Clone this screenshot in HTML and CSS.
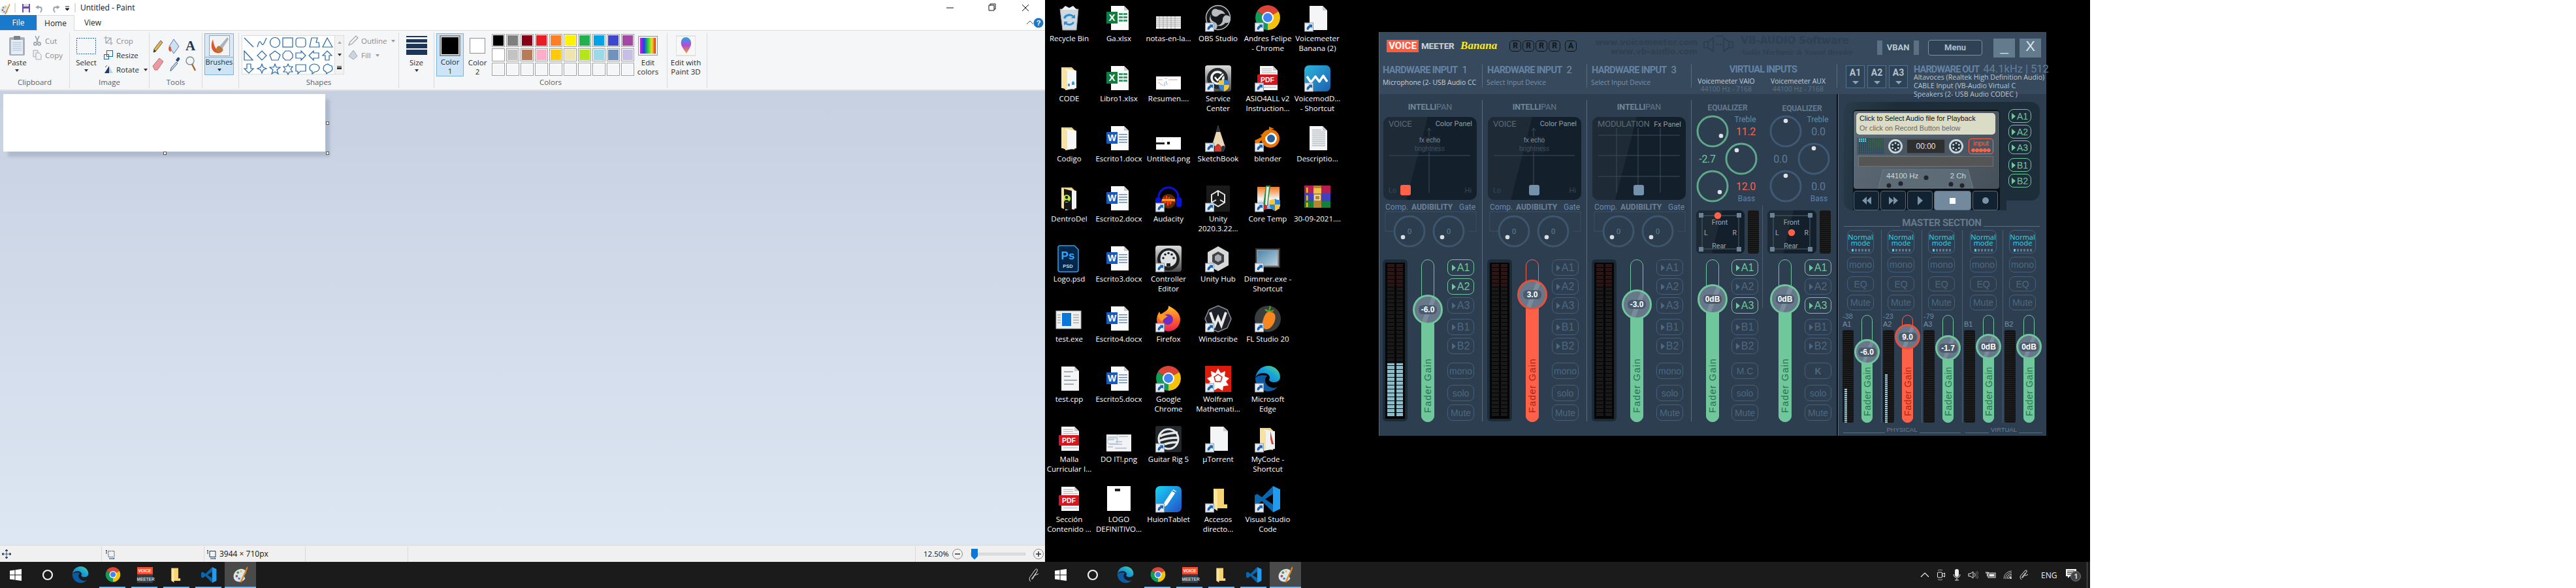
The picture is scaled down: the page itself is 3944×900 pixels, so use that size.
FILE: index.html
```html
<!DOCTYPE html>
<html lang="en">
<head>
<meta charset="utf-8">
<title>Desktop</title>
<link rel="stylesheet" href="styles.css">
</head>
<body>
<svg class="defs" aria-hidden="true">
<defs>
<linearGradient id="edgeG" x1="0" y1="1" x2="1" y2="0"><stop offset="0" stop-color="#0c6cc4"/><stop offset=".6" stop-color="#1ba6d8"/><stop offset="1" stop-color="#5fdc6a"/></linearGradient>
<linearGradient id="vmG" x1="0" y1="0" x2="1" y2="1"><stop offset="0" stop-color="#2bb6dc"/><stop offset="1" stop-color="#1c5fb0"/></linearGradient>
<linearGradient id="huG" x1="0" y1="0" x2="1" y2="1"><stop offset="0" stop-color="#16d4f6"/><stop offset="1" stop-color="#2350c8"/></linearGradient>
<linearGradient id="svcG" x1="0" y1="0" x2="0" y2="1"><stop offset="0" stop-color="#dcdcdc"/><stop offset="1" stop-color="#4a4a4a"/></linearGradient>
<linearGradient id="ctG" x1="0" y1="0" x2="0" y2="1"><stop offset="0" stop-color="#f07a1e"/><stop offset=".55" stop-color="#f5f5f5"/><stop offset="1" stop-color="#7aa6dc"/></linearGradient>
<linearGradient id="ffG" x1="0" y1="0" x2="0" y2="1"><stop offset="0" stop-color="#ffc02a"/><stop offset=".6" stop-color="#ff5a2c"/><stop offset="1" stop-color="#e8205a"/></linearGradient>
<linearGradient id="dimG" x1="0" y1="0" x2="1" y2="1"><stop offset="0" stop-color="#4f86ad"/><stop offset="1" stop-color="#b8d2de"/></linearGradient>
<linearGradient id="rainG" x1="0" y1="0" x2="1" y2="0"><stop offset="0" stop-color="#d020d0"/><stop offset=".25" stop-color="#2040f0"/><stop offset=".5" stop-color="#20d040"/><stop offset=".75" stop-color="#f0e020"/><stop offset="1" stop-color="#f02020"/></linearGradient>
<linearGradient id="p3dG" x1="0" y1="0" x2="0" y2="1"><stop offset="0" stop-color="#20a8e8"/><stop offset=".5" stop-color="#b84ad8"/><stop offset="1" stop-color="#f8a020"/></linearGradient>
<pattern id="pB" width="3" height="3" patternUnits="userSpaceOnUse"><rect width="2" height="2" fill="#1c4a5c"/></pattern>
<pattern id="pG" width="3" height="3" patternUnits="userSpaceOnUse"><rect width="2" height="2" fill="#1f5a36"/></pattern>
<pattern id="pC" width="3" height="3" patternUnits="userSpaceOnUse"><rect width="2" height="2" fill="#2fe0f4"/></pattern>

<g id="sc"><rect x=".5" y="27" width="13" height="13" fill="#e9edf1" stroke="#8b98a4"/><path d="M3.5 37.5c0-4 1.500-6 4.500-6.500l-1.500-1.500h5.500v5.500l-1.600-1.600c-2 .6-3.400 1.800-3.900 4.100z" fill="#1a62b4"/></g>
<g id="doc"><path d="M8 1h20l7 7v30H8z" fill="#fbfbfb"/><path d="M28 1v7h7z" fill="#c9cdd1"/></g>
<g id="blank"><path d="M8 1h20l7 7v30H8z" fill="#f4f5f6"/><path d="M28 1v7h7z" fill="#c9cdd1"/></g>
<g id="excel"><use href="#doc"/><g fill="#3a9a68"><rect x="20" y="12" width="6" height="3"/><rect x="27" y="12" width="6" height="3"/><rect x="20" y="17" width="6" height="3"/><rect x="27" y="17" width="6" height="3"/><rect x="20" y="22" width="6" height="3"/><rect x="27" y="22" width="6" height="3"/></g><rect x="1" y="10" width="17" height="18" fill="#107c41"/><text x="9.500" y="24" class="ict" font-size="15" fill="#fff">X</text></g>
<g id="word"><use href="#doc"/><g fill="#5a8fdc"><rect x="20" y="13" width="13" height="1.500"/><rect x="20" y="17" width="13" height="1.500"/><rect x="20" y="21" width="13" height="1.500"/><rect x="20" y="25" width="13" height="1.500"/></g><rect x="1" y="10" width="17" height="18" fill="#185abd"/><text x="9.500" y="24" class="ict" font-size="14" fill="#fff">W</text></g>
<g id="pdf"><path d="M8 1h20l7 7v30H8z" fill="#f5f5f5"/><path d="M28 1v7h7z" fill="#c9cdd1"/><g fill="#b8b8b8"><rect x="11" y="5" width="15" height="1"/><rect x="11" y="8" width="15" height="1"/><rect x="11" y="11" width="22" height="1"/><rect x="11" y="33" width="22" height="1"/></g><rect x="4" y="14" width="31" height="16" rx="1" fill="#d9141e"/><text x="19.500" y="26" class="ict" font-size="10.500" fill="#fff">PDF</text></g>
<g id="textdoc"><path d="M8 1h20l7 7v30H8z" fill="#f4f5f6"/><path d="M28 1v7h7z" fill="#c9cdd1"/><path d="M12 7h14M12 10h20M12 13h20M12 16h20M12 19h20M12 22h20M12 25h20M12 28h20M12 31h20" stroke="#9aa0a6"/></g>
<g id="cppdoc"><path d="M8 1h20l7 7v30H8z" fill="#f4f5f6"/><path d="M28 1v7h7z" fill="#c9cdd1"/><path d="M12 9h14M12 16h10M12 22h20M12 28h15" stroke="#a6acb2" stroke-width="2"/></g>
<g id="folderdoc"><path d="M8 3h16l4 4v30l-10-2-10 0z" fill="#f3d27a"/><path d="M14 5l17 3v27l-17 3z" fill="#f6f7f8"/><path d="M8 3v31l9 4V8z" fill="#f7e3a1"/><path d="M24 26l2-2 2 2v4h-4zM18 28h3v4h-3z" fill="#3a9ad9"/></g>
<g id="folderplain"><path d="M8 3h16l4 4v30l-10-2-10 0z" fill="#f3d27a"/><path d="M14 5l17 3v27l-17 3z" fill="#f6f7f8"/><path d="M8 3v31l9 4V8z" fill="#f7e3a1"/></g>
<g id="dentro"><path d="M8 3h16l4 4v30l-10-2-10 0z" fill="#f3d27a"/><path d="M14 5l17 3v27l-17 3z" fill="#f1f2f3"/><path d="M8 4v31l16 3V8z" fill="#151515"/><circle cx="16" cy="20" r="6" fill="#b6e83a"/><circle cx="16" cy="18" r="2.200" fill="#152015"/><path d="M12 25c1-4 7-4 8 0" fill="#152015"/><path d="M8 3v31l4 2V5z" fill="#f7e3a1"/></g>
<g id="folderpdf"><path d="M8 3h16l4 4v30l-10-2-10 0z" fill="#f3d27a"/><path d="M14 5l17 3v27l-17 3z" fill="#f1f2f3"/><path d="M8 3v31l9 4V8z" fill="#f7e3a1"/><path d="M24 8l5 20-3 0-2-8z" fill="#d9402c"/></g>
<g id="yfolder"><path d="M13 4h16v24h5v6H19l-6 0z" fill="#f6d46f"/><path d="M13 4l6 3v31l-6-4z" fill="#f9e6a6"/></g>
<g id="recycle"><path d="M6 6h28l-3 32H10z" fill="#cfd8de" stroke="#98a5ad"/><path d="M8 7l6-6 6 3 6-3 6 6z" fill="#eef2f4"/><path d="M14 21a7 7 0 0 1 11-3l-2 2h6v-6l-2 2a10 10 0 0 0-16 3zM26 25a7 7 0 0 1-10 2l2-2h-6v6l2-2a10 10 0 0 0 14-2z" fill="#2a8fd8"/></g>
<g id="tNotas"><rect x="1" y="17" width="38" height="19" fill="#f0f0f0"/><path d="M1 20h38M1 23h38M1 26h38M1 29h38M1 32h38M6 17v19M12 17v19M18 17v19M24 17v19M30 17v19" stroke="#9a9a9a" stroke-width=".8"/></g>
<g id="tRes"><rect x="1" y="17" width="38" height="20" fill="#fff"/><path d="M3 22h8M4 26l8 5M14 20h4M20 22h14" stroke="#e0a090"/><path d="M14 26v6M16 24l2 6" stroke="#7ab0e0"/></g>
<g id="tUnt"><rect x="1" y="18" width="38" height="19" fill="#fff"/><rect x="1" y="26" width="13" height="3" fill="#222"/><rect x="18" y="25" width="4" height="4" fill="#111"/><path d="M5 21h1M10 22h1" stroke="#888"/></g>
<g id="tDoit"><rect x="1" y="13" width="38" height="26" fill="#f1f3f5"/><path d="M3 17h14M20 16h14M3 21h10M15 24h10M5 28h20M3 32h8M14 34h18" stroke="#8fa4ba"/><path d="M18 13v16M3 19h14v8H3z" stroke="#b6c4d2" fill="none"/></g>
<g id="tLogo"><rect x="2" y="0" width="36" height="38" fill="#fff"/><rect x="14" y="4" width="8" height="4" fill="#222"/></g>
<g id="obs"><circle cx="20" cy="19" r="18.500" fill="#15171a" stroke="#c8c8c8" stroke-width="1.400"/><path d="M20 7a12 12 0 0 1 11 7 9 9 0 0 0-11 2 6 6 0 1 1 0-9z" fill="#b9bcc0"/><path d="M9 27a12 12 0 0 1 0-13 9 9 0 0 0 6 12 6 6 0 1 1-6 1z" fill="#b9bcc0"/><path d="M31 27a12 12 0 0 1-13 4 9 9 0 0 0 9-10 6 6 0 1 1 4 6z" fill="#b9bcc0"/></g>
<g id="chrome"><path d="M20 19L3.600 9.500A19 19 0 0 1 36.400 9.500z" fill="#db4437"/><path d="M20 19L36.400 9.500A19 19 0 0 1 20 38z" fill="#f4c20d"/><path d="M20 19L20 38A19 19 0 0 1 3.600 9.500z" fill="#0f9d58"/><circle cx="20" cy="19" r="9" fill="#fff"/><circle cx="20" cy="19" r="7" fill="#4285f4"/></g>
<g id="edge"><path d="M1 19C2 8 10 0 21 0c10 0 18 8 18 17 0 5-4 8-9 8-5 0-8-2-8-4 0-1 1-1 1-3 0-4-4-7-9-7C7 11 2 14 1 19z" fill="url(#edgeG)"/><path d="M1 19c0 11 9 20 20 20 6 0 11-3 14-7-3 2-7 2-10 1-6-2-10-7-9-13 1-3 3-4 3-5-8-2-16 0-18 4z" fill="#0c59a4"/></g>
<g id="vscode"><path d="M28 0l11 5v30l-11 5z" fill="#1f9cf0"/><path d="M28 0L11 17 4 12 0 14v12l4 2 7-5 17 17V28L16 20 28 12z" fill="#0a66ad"/></g>
<g id="service"><rect width="40" height="40" rx="4" fill="url(#svcG)"/><circle cx="19" cy="20" r="16" fill="#25292d"/><circle cx="19" cy="19" r="9" fill="none" stroke="#f0f0f0" stroke-width="3.500"/><path d="M15 18l4 5 9-10" fill="none" stroke="#25292d" stroke-width="5"/><path d="M15 18l4 5 9-10" fill="none" stroke="#fff" stroke-width="2.500"/><use href="#shield" transform="translate(21 21)"/></g>
<g id="shield"><path d="M8 0c2 2 5 2 8 2v8c0 4-3 7-8 9-5-2-8-5-8-9V2c3 0 6 0 8-2z" fill="#2f86d8"/><path d="M8 0v9H0V2c3 0 6 0 8-2zM8 9h8c0 5-3 8-8 10z" fill="#f8c63a"/></g>
<g id="voicemod"><rect width="40" height="40" rx="7" fill="url(#vmG)"/><path d="M4 17l6 9 7-9 6 8 6-9 6 9" fill="none" stroke="#fff" stroke-width="3.400" stroke-linejoin="round"/></g>
<g id="sketch"><path d="M20 0l11 33-3 7H13l-3-7z" fill="#ead9b4"/><path d="M20 0l3.500 10h-7z" fill="#30343a"/><path d="M10 33c2-3 5-3 6 0v7h-4zM16 33c2-6 6-6 8 0v7h-8z" fill="#263340"/><path d="M15 40v-7c2-5 8-5 10 0v7z" fill="#d8382c"/><path d="M25 40v-7c2-3 5-2 6 0l-3 7z" fill="#263340"/></g>
<g id="blender"><circle cx="24" cy="20" r="14" fill="#ea7600"/><circle cx="25" cy="20" r="9" fill="#fff"/><circle cx="25" cy="20" r="6" fill="#27609a"/><path d="M0 23l14-7-6-1 12-6 4 2-16 14-4 8c-1 1-3 0-2-2z" fill="#ea7600"/><path d="M22 2l8 3-8 2z" fill="#ea7600"/></g>
<g id="audacity"><path d="M5 28V18a15 15 0 0 1 30 0v10" fill="none" stroke="#0a14d8" stroke-width="3"/><rect x="0" y="18" width="8" height="15" rx="3.500" fill="#0a14d8"/><rect x="32" y="18" width="8" height="15" rx="3.500" fill="#0a14d8"/><ellipse cx="20" cy="24" rx="11" ry="11" fill="#5c2c08"/><path d="M9 24h3l1-4 2 7 2-11 2 15 2-13 2 11 2-8 2 3h3" fill="none" stroke="#ff3a14" stroke-width="2"/><path d="M10 22h20" stroke="#ffc81e" stroke-width="2"/></g>
<g id="unity"><rect x="2" y="0" width="36" height="40" fill="#1a1a1a"/><path d="M20 8l10 6v12l-10 6-10-6V14z" fill="none" stroke="#e6e6e6" stroke-width="2"/><path d="M20 8v8M10 26l7-4M30 26l-7-4" stroke="#e6e6e6" stroke-width="2"/></g>
<g id="coretemp"><rect x="4" y="2" width="34" height="34" fill="url(#ctG)"/><path d="M17 0h7l-4 31-7-1z" fill="#1e8a3c"/><path d="M18 2h4l-3 28h-3z" fill="#eee"/><circle cx="15" cy="33" r="4" fill="#e02020"/><use href="#shield" transform="translate(23 20)"/></g>
<g id="winrar"><rect y="0" width="40" height="12" fill="#b81e50"/><rect y="12" width="40" height="12" fill="#4040c0"/><rect y="24" width="40" height="10" fill="#14803a"/><rect x="3" y="3" width="2.500" height="8" fill="#f0c020"/><rect x="3" y="15" width="2.500" height="8" fill="#f0c020"/><rect x="3" y="26" width="2.500" height="7" fill="#f0c020"/><rect x="14" y="0" width="12" height="34" fill="#b8842e"/><rect x="14" y="4" width="12" height="8" fill="#f0c050"/><rect x="16" y="15" width="8" height="7" fill="none" stroke="#eee" stroke-width="1.500"/></g>
<g id="ps"><path d="M3 3a3 3 0 0 1 3-3h22l6 6v31a3 3 0 0 1-3 3H6a3 3 0 0 1-3-3z" fill="#00264a" stroke="#2d9ee8" stroke-width="1.500"/><text x="18" y="21" class="ict" font-size="17" fill="#31a8ff">Ps</text><text x="18" y="34" class="ict" font-size="7.500" fill="#c8d8e8">PSD</text></g>
<g id="ctrl"><rect width="40" height="40" rx="4" fill="url(#svcG)"/><circle cx="20" cy="21" r="17" fill="#1e1e1e"/><circle cx="20" cy="20" r="12.500" fill="#dfe2e4"/><g fill="#222"><circle cx="12" cy="19" r="1.800"/><circle cx="15" cy="13.500" r="1.800"/><circle cx="20" cy="11.500" r="1.800"/><circle cx="25" cy="13.500" r="1.800"/><circle cx="28" cy="19" r="1.800"/></g><rect x="17" y="27" width="6" height="5" fill="#1e1e1e"/></g>
<g id="uhub"><path d="M20 1l16 9v20l-16 9-16-9V10z" fill="#d6d8da"/><path d="M20 9l9 5v11l-9 5-9-5V14z" fill="#3f4246"/><path d="M20 13l5 3v6l-5 3-5-3v-6z" fill="#a8acb0"/></g>
<g id="dimmer"><rect x="1" y="4" width="38" height="30" rx="1" fill="#333"/><rect x="3" y="6" width="34" height="26" fill="#8a9298"/><rect x="5" y="8" width="30" height="22" fill="url(#dimG)"/></g>
<g id="testexe"><rect x="0" y="8" width="38" height="27" fill="#f0f0f0" stroke="#b8b8b8"/><rect x="9" y="11" width="14" height="20" fill="#0a78d8"/><path d="M2 14h5M2 18h5M2 22h5M2 26h5M26 14h9M26 18h9M26 22h9M26 26h9" stroke="#8a8a8a"/></g>
<g id="firefox"><path d="M20 0c10 5 18 11 18 21a18 18 0 0 1-36 0c0-5 2-9 4-12l2 4c3-2 8-4 11-8 1-2 1-3 1-5z" fill="url(#ffG)"/><circle cx="19" cy="21" r="8" fill="#6e2cc8"/><path d="M3 16c4-6 10-2 16 0-4 3-7 4-9 9z" fill="#ff9a20"/></g>
<g id="windscribe"><path d="M20 0l14 6 6 14-6 14-14 6-14-6-6-14 6-14z" fill="#1e2228" stroke="#8d9096" stroke-width="1.500"/><path d="M8 10l7 20 5-12 5 12 7-20" fill="none" stroke="#e8e8e8" stroke-width="4"/></g>
<g id="fl"><circle cx="20" cy="20" r="20" fill="#3a3d3e"/><path d="M22 9c8 0 11 5 9 13-2 8-8 14-13 14-6 0-8-7-5-15 2-7 5-12 9-12z" fill="#f8861e"/><path d="M20 9c-3 0-4-2-5-4 3 0 5 1 6 3l2-8 2 1-2 7 7-2-2 3z" fill="#5aa62c"/></g>
<g id="wolfram"><rect width="40" height="40" fill="#dc1b0b"/><path d="M20 4l4 7 7-3-1 8 7 3-5 5 4 6-8 1-1 7-7-4-7 4-1-7-8-1 4-6-5-5 7-3-1-8 7 3z" fill="#fff"/><path d="M20 13l6 4-2 7h-8l-2-7z" fill="none" stroke="#dc1b0b" stroke-width="1.500"/></g>
<g id="guitar"><rect width="40" height="40" rx="3" fill="#22282c"/><circle cx="20" cy="20" r="15" fill="none" stroke="#e8e8e8" stroke-width="3"/><path d="M7 16c8-5 18-5 27-6M6 23c8-4 20-5 28-5M9 30c8-4 16-5 24-5" stroke="#e8e8e8" stroke-width="3.500" fill="none"/></g>
<g id="huion"><rect width="40" height="40" rx="7" fill="url(#huG)"/><path d="M27 5l5 3-14 21-6 4 1-7z" fill="#fff"/><path d="M26 7l5 3" stroke="#1a72d8" stroke-width="1.500"/></g>
<g id="palette"><path d="M3 15C5 7 14 3 20 6c4 2 4 6 1 8-2 2 0 5 1 7-3 5-8 6-12 5C4 25 2 20 3 15z" fill="#dbe6ee"/><circle cx="8" cy="17" r="2" fill="#d8342c"/><circle cx="10" cy="11" r="2" fill="#37a24a"/><circle cx="15" cy="9" r="1.800" fill="#f0c020"/><circle cx="12" cy="21" r="1.800" fill="#3a70d8"/><path d="M13 27L22 8l2-5 2-2 0 3-2 5-8 18z" fill="#e08a1e"/></g>
</defs>
</svg>

<div class="screen">
  <div class="top">
    <section class="paint">
      <header class="p-title">
        <svg class="p-qa" viewBox="0 0 120 24" width="120" height="24"><use href="#palette" transform="translate(-1 5) scale(.62)"/><path d="M23 5v14" stroke="#bbb"/><rect x="34" y="6" width="12" height="13" fill="#6c4d9e"/><rect x="36" y="6" width="8" height="4" fill="#ddd"/><rect x="36" y="13" width="8" height="6" fill="#eee"/><path d="M59 9l-3 2 3 2M56 11h5c3 0 4 4 1 8" fill="none" stroke="#9aa4ae" stroke-width="2"/><path d="M87 9l3 2-3 2M90 11h-5c-3 0-4 4-1 8" fill="none" stroke="#9aa4ae" stroke-width="2"/><path d="M100 10h6M100 13h6l-3 3z" stroke="#222" fill="#222"/><path d="M115 5v14" stroke="#bbb"/></svg>
        <span class="p-name">Untitled - Paint</span>
        <svg class="p-wc" viewBox="0 0 140 24" width="140" height="24"><path d="M3 12h11" stroke="#111"/><path d="M68 8h8v8h-8zM70 8V6h8v8h-2" fill="none" stroke="#111"/><path d="M119 7l10 10M129 7l-10 10" stroke="#111"/></svg>
      </header>
      <nav class="p-tabs">
        <span class="tab tab-file">File</span><span class="tab tab-home">Home</span><span class="tab">View</span>
        <svg class="p-help" viewBox="0 0 30 24" width="30" height="24"><path d="M2 14l5-5 5 5" fill="none" stroke="#555"/><circle cx="20" cy="12" r="7.500" fill="#1d78c8"/><text x="20" y="16" class="ict" font-size="11" fill="#fff">?</text></svg>
      </nav>
      <div class="ribbon">
        <div class="rg rg-clip">
          <div class="rb">
            <div class="big b-paste">
              <svg viewBox="0 0 30 32" width="30" height="32"><rect x="3" y="3" width="24" height="28" rx="2" fill="#a8b0b8"/><rect x="6" y="7" width="18" height="22" fill="#e6edf6"/><path d="M8 11h14M8 14h14M8 17h14M8 20h14M8 23h14" stroke="#a9bdd6"/><rect x="10" y="1" width="10" height="6" rx="1" fill="#7a828a"/></svg>
              <span>Paste</span><i class="dn"></i>
            </div>
            <div class="sm">
              <div class="smr off"><svg viewBox="0 0 16 16" width="16" height="16"><path d="M5 1l4 9M11 1L7 10" stroke="#8e98a2" stroke-width="1.400"/><circle cx="5" cy="13" r="2.200" fill="none" stroke="#8e98a2" stroke-width="1.400"/><circle cx="11" cy="13" r="2.200" fill="none" stroke="#8e98a2" stroke-width="1.400"/></svg><span>Cut</span></div>
              <div class="smr off"><svg viewBox="0 0 16 16" width="16" height="16"><path d="M2 1h7v10H2z" fill="#eee" stroke="#a5adb5"/><path d="M6 5h5l3 3v7H6z" fill="#f4f4f4" stroke="#a5adb5"/></svg><span>Copy</span></div>
            </div>
          </div>
          <div class="rl">Clipboard</div>
        </div>
        <div class="rg rg-img">
          <div class="rb">
            <div class="big b-select">
              <svg viewBox="0 0 44 32" width="44" height="32"><rect x="7.500" y="4.500" width="29" height="24" fill="none" stroke="#1b5fa5" stroke-dasharray="2 1.500"/></svg>
              <span>Select</span><i class="dn"></i>
            </div>
            <div class="sm">
              <div class="smr off"><svg viewBox="0 0 16 16" width="16" height="16"><path d="M4 1v11h11M1 4h11v11M4 12L12 4" fill="none" stroke="#9aa4ae" stroke-width="1.200"/></svg><span>Crop</span></div>
              <div class="smr"><svg viewBox="0 0 16 16" width="16" height="16"><rect x="1.500" y="7.500" width="7" height="7" fill="none" stroke="#1b5fa5"/><rect x="5.500" y="1.500" width="9" height="9" fill="none" stroke="#1b5fa5"/></svg><span>Resize</span></div>
              <div class="smr"><svg viewBox="0 0 16 16" width="16" height="16"><path d="M2 14L9 3v11z" fill="#1e3e60"/><path d="M9 3l6 11H9z" fill="#c4d2e0"/><path d="M3 5l3-3" stroke="#1b5fa5"/></svg><span>Rotate</span><i class="dn dn-in"></i></div>
            </div>
          </div>
          <div class="rl">Image</div>
        </div>
        <div class="rg rg-tools">
          <div class="rb">
            <div class="toolgrid">
              <svg viewBox="0 0 20 24" width="20" height="24"><path d="M3 21l1-5L14 3l3 3L6 20z" fill="#e9b53c" stroke="#52606e"/><path d="M3 21l1-4 3 2z" fill="#333"/></svg>
              <svg viewBox="0 0 20 26" width="20" height="26"><path d="M9 2l8 11-8 11-7-11z" fill="#cfe0f1" stroke="#4f7eb0"/><path d="M2 13c-2 4 0 8 2 8 2 0 0-5 1-7z" fill="#e0522c"/></svg>
              <span class="t-a">A</span>
              <svg viewBox="0 0 20 24" width="20" height="24"><path d="M2 15L12 3l6 5L9 21H5z" fill="#ec9aa0" stroke="#b57078"/></svg>
              <svg viewBox="0 0 20 26" width="20" height="26"><path d="M4 24l1-5 8-9 2 2-8 9z" fill="#c2d4e6" stroke="#46688a"/><path d="M12 7l3-4c2-1 4 1 3 3l-3 4z" fill="#1f4a78"/></svg>
              <svg viewBox="0 0 20 26" width="20" height="26"><circle cx="9" cy="8" r="6" fill="#f2f5f8" stroke="#7e8a96" stroke-width="1.400"/><path d="M12 13l5 10" stroke="#a5642a" stroke-width="2.400"/></svg>
            </div>
          </div>
          <div class="rl">Tools</div>
        </div>
        <div class="rg rg-brush">
          <div class="rb">
            <div class="brush">
              <div class="brush-up"><svg viewBox="0 0 32 32" width="32" height="32"><rect x=".5" y=".5" width="31" height="31" fill="#f2f3f4" stroke="#9aa3ac"/><path d="M6 6c-4 9-3 19 6 21 6 1 9-2 10-6-3 3-7 3-10 1-3-3-5-8-6-16z" fill="#e0562c"/><path d="M28 3L16 17l4 4L30 6z" fill="#a9b4be"/><path d="M15 16c-3 1-4 4-4 6s4 5 7 3c2-1 3-3 3-5z" fill="#b57a3c"/></svg></div>
              <div class="brush-lo"><span>Brushes</span><i class="dn"></i></div>
            </div>
          </div>
          <div class="rl rl-empty">&nbsp;</div>
        </div>
        <div class="rg rg-shapes">
          <div class="rb">
            <div class="gallery">
              <svg viewBox="0 0 141 60" width="141" height="60"><g fill="none" stroke="#2467a6" stroke-width="1.200">
                <path d="M3 3l14 14"/><path d="M23 17c3-10 4-10 6-6s3 4 8-8"/><circle cx="50" cy="10" r="7.500"/><rect x="62" y="3" width="15" height="14"/><rect x="82" y="3" width="15" height="14" rx="4"/><path d="M103 17l3-14h9l-2 7h4l1 7z"/><path d="M130 3l8 14h-15z"/>
                <path d="M3 23l13 14H3z"/><path d="M30 23l7 7-7 7-7-7z"/><path d="M50 23l8 6-3 8H45l-3-8z"/><path d="M66 23h7l4 5v5l-4 4h-7l-4-4v-5z"/><path d="M82 26h8v-3l7 7-7 7v-3h-8z"/><path d="M117 26h-8v-3l-7 7 7 7v-3h8z"/><path d="M130 23l7 7h-4v7h-6v-7h-4z"/>
                <path d="M7 43h6v7h4l-7 7-7-7h4z"/><path d="M30 43l2 5 5 2-5 2-2 5-2-5-5-2 5-2z"/><path d="M50 43l2 5h6l-5 4 2 6-5-3-5 3 2-6-5-4h6z"/><path d="M70 43l2 4h5l-3 4 3 4h-5l-2 4-2-4h-5l3-4-3-4h5z"/><path d="M82 44h15v10h-8l-4 4v-4h-3z"/><path d="M110 43c5 0 8 3 8 6s-3 6-7 6l-4 3v-4c-3-1-4-3-4-5 0-3 3-6 7-6z"/><path d="M131 43l3 2 3 1 1 4-1 3-3 2-3 1-2 2-1-3-3-2-1-3 1-4 3-2z"/>
              </g></svg>
              <div class="gal-scroll"><i class="up"></i><i class="dn"></i><i class="more"></i></div>
            </div>
            <div class="sm sm-ol">
              <div class="smr off"><svg viewBox="0 0 16 16" width="16" height="16"><path d="M1 15l2-5L12 1l3 3-9 9z" fill="none" stroke="#9aa4ae" stroke-width="1.200"/></svg><span>Outline</span><i class="dn dn-in dn-off"></i></div>
              <div class="smr off"><svg viewBox="0 0 16 16" width="16" height="16"><path d="M8 1l6 9-6 5-7-5z" fill="#cdd6df" stroke="#9aa4ae"/></svg><span>Fill</span><i class="dn dn-in dn-off"></i></div>
            </div>
          </div>
          <div class="rl">Shapes</div>
        </div>
        <div class="rg rg-size">
          <div class="rb">
            <div class="big b-size">
              <svg viewBox="0 0 32 32" width="32" height="32"><g fill="#1d3658"><rect y="1" width="32" height="2"/><rect y="6" width="32" height="5"/><rect y="13" width="32" height="7"/><rect y="22" width="32" height="8"/></g></svg>
              <span>Size</span><i class="dn"></i>
            </div>
          </div>
          <div class="rl rl-empty">&nbsp;</div>
        </div>
        <div class="rg rg-colors">
          <div class="rb">
            <div class="col1">
              <div class="sw1"></div>
              <span>Color<br>1</span>
            </div>
            <div class="col2">
              <div class="sw2"></div>
              <span>Color<br>2</span>
            </div>
            <div class="palette">
              <span style="background:#000"></span><span style="background:#7f7f7f"></span><span style="background:#880015"></span><span style="background:#ed1c24"></span><span style="background:#ff7f27"></span><span style="background:#fff200"></span><span style="background:#22b14c"></span><span style="background:#00a2e8"></span><span style="background:#3f48cc"></span><span style="background:#a349a4"></span>
              <span style="background:#fff"></span><span style="background:#c3c3c3"></span><span style="background:#b97a57"></span><span style="background:#ffaec9"></span><span style="background:#ffc90e"></span><span style="background:#efe4b0"></span><span style="background:#b5e61d"></span><span style="background:#99d9ea"></span><span style="background:#7092be"></span><span style="background:#c8bfe7"></span>
              <span></span><span></span><span></span><span></span><span></span><span></span><span></span><span></span><span></span><span></span>
            </div>
            <div class="big2 b-edit">
              <svg viewBox="0 0 30 32" width="30" height="32"><rect x=".5" y="1.500" width="29" height="29" fill="#eee" stroke="#999"/><rect x="3" y="4" width="24" height="24" fill="url(#rainG)"/></svg>
              <span>Edit<br>colors</span>
            </div>
          </div>
          <div class="rl">Colors</div>
        </div>
        <div class="rg rg-p3d">
          <div class="rb">
            <div class="big2 b-p3d">
              <svg viewBox="0 0 30 32" width="30" height="32"><rect x="0" y="1" width="30" height="30" fill="#f8f8f8" stroke="#ccc"/><path d="M15 3c6 0 9 6 8 11s-5 10-7 14c-2-4-7-9-8-14s1-11 7-11z" fill="url(#p3dG)"/></svg>
              <span>Edit with<br>Paint 3D</span>
            </div>
          </div>
          <div class="rl rl-empty">&nbsp;</div>
        </div>
      </div>
      <main class="p-canvas">
        <div class="sheet"><i class="hd hd-r"></i><i class="hd hd-b"></i><i class="hd hd-c"></i></div>
      </main>
      <footer class="p-status">
        <div class="st st1"><svg viewBox="0 0 16 16" width="16" height="16"><path d="M8 1v14M1 8h14M8 1L6 3h4zM8 15l-2-2h4zM1 8l2-2v4zM15 8l-2-2v4z" fill="#1d3658" stroke="#1d3658" stroke-width=".8"/></svg></div>
        <div class="st st2"><svg viewBox="0 0 16 16" width="16" height="16"><path d="M5 3.500h9v9H5z" fill="none" stroke="#1d3658" stroke-dasharray="1.500 1"/><path d="M2 2v6M1 3l1-1 1 1M6 15h8M13 14l1 1-1 1" fill="none" stroke="#1d3658"/></svg></div>
        <div class="st st3"><svg viewBox="0 0 16 16" width="16" height="16"><path d="M5 3.500h9v9H5z" fill="none" stroke="#1d3658"/><path d="M2 2v6M1 3l1-1 1 1M6 15h8M13 14l1 1-1 1" fill="none" stroke="#1d3658"/></svg><span>3944 × 710px</span></div>
        <div class="st st4"></div>
        <div class="st-zoom">
          <span class="zp">12.50%</span>
          <svg viewBox="0 0 16 16" width="16" height="16"><circle cx="8" cy="8" r="7.500" fill="#f4f4f4" stroke="#8a8a8a"/><path d="M4 8h8" stroke="#333" stroke-width="1.500"/></svg>
          <div class="zs"><i></i></div>
          <svg viewBox="0 0 16 16" width="16" height="16"><circle cx="8" cy="8" r="7.500" fill="#f4f4f4" stroke="#8a8a8a"/><path d="M4 8h8M8 4v8" stroke="#333" stroke-width="1.500"/></svg>
        </div>
      </footer>
    </section>

    <section class="desk">
      <div class="icons">
        <div class="di"><svg viewBox="0 0 40 40"><use href="#recycle"/></svg><span>Recycle Bin</span></div>
        <div class="di"><svg viewBox="0 0 40 40"><use href="#excel"/></svg><span>Ga.xlsx</span></div>
        <div class="di"><svg viewBox="0 0 40 40"><use href="#tNotas"/></svg><span>notas-en-la...</span></div>
        <div class="di"><svg viewBox="0 0 40 40"><use href="#obs"/><use href="#sc"/></svg><span>OBS Studio</span></div>
        <div class="di"><svg viewBox="0 0 40 40"><use href="#chrome"/><use href="#sc"/></svg><span>Andres Felipe - Chrome</span></div>
        <div class="di"><svg viewBox="0 0 40 40"><use href="#blank"/><use href="#sc"/></svg><span>Voicemeeter Banana (2)</span></div>

        <div class="di"><svg viewBox="0 0 40 40"><use href="#folderdoc"/></svg><span>CODE</span></div>
        <div class="di"><svg viewBox="0 0 40 40"><use href="#excel"/></svg><span>Libro1.xlsx</span></div>
        <div class="di"><svg viewBox="0 0 40 40"><use href="#tRes"/></svg><span>Resumen....</span></div>
        <div class="di"><svg viewBox="0 0 40 40"><use href="#service"/><use href="#sc"/></svg><span>Service Center</span></div>
        <div class="di"><svg viewBox="0 0 40 40"><use href="#pdf"/><use href="#sc"/></svg><span>ASIO4ALL v2 Instruction...</span></div>
        <div class="di"><svg viewBox="0 0 40 40"><use href="#voicemod"/><use href="#sc"/></svg><span>VoicemodD... - Shortcut</span></div>

        <div class="di"><svg viewBox="0 0 40 40"><use href="#folderplain"/></svg><span>Codigo</span></div>
        <div class="di"><svg viewBox="0 0 40 40"><use href="#word"/></svg><span>Escrito1.docx</span></div>
        <div class="di"><svg viewBox="0 0 40 40"><use href="#tUnt"/></svg><span>Untitled.png</span></div>
        <div class="di"><svg viewBox="0 0 40 40"><use href="#sketch"/><use href="#sc"/></svg><span>SketchBook</span></div>
        <div class="di"><svg viewBox="0 0 40 40"><use href="#blender"/><use href="#sc"/></svg><span>blender</span></div>
        <div class="di"><svg viewBox="0 0 40 40"><use href="#textdoc"/></svg><span>Descriptio...</span></div>

        <div class="di"><svg viewBox="0 0 40 40"><use href="#dentro"/></svg><span>DentroDel</span></div>
        <div class="di"><svg viewBox="0 0 40 40"><use href="#word"/></svg><span>Escrito2.docx</span></div>
        <div class="di"><svg viewBox="0 0 40 40"><use href="#audacity"/><use href="#sc"/></svg><span>Audacity</span></div>
        <div class="di"><svg viewBox="0 0 40 40"><use href="#unity"/><use href="#sc"/></svg><span>Unity 2020.3.22...</span></div>
        <div class="di"><svg viewBox="0 0 40 40"><use href="#coretemp"/><use href="#sc"/></svg><span>Core Temp</span></div>
        <div class="di"><svg viewBox="0 0 40 40"><use href="#winrar"/></svg><span>30-09-2021....</span></div>

        <div class="di"><svg viewBox="0 0 40 40"><use href="#ps"/></svg><span>Logo.psd</span></div>
        <div class="di"><svg viewBox="0 0 40 40"><use href="#word"/></svg><span>Escrito3.docx</span></div>
        <div class="di"><svg viewBox="0 0 40 40"><use href="#ctrl"/><use href="#sc"/></svg><span>Controller Editor</span></div>
        <div class="di"><svg viewBox="0 0 40 40"><use href="#uhub"/><use href="#sc"/></svg><span>Unity Hub</span></div>
        <div class="di"><svg viewBox="0 0 40 40"><use href="#dimmer"/><use href="#sc"/></svg><span>Dimmer.exe - Shortcut</span></div>
        <div class="di di-none"></div>

        <div class="di"><svg viewBox="0 0 40 40"><use href="#testexe"/></svg><span>test.exe</span></div>
        <div class="di"><svg viewBox="0 0 40 40"><use href="#word"/></svg><span>Escrito4.docx</span></div>
        <div class="di"><svg viewBox="0 0 40 40"><use href="#firefox"/><use href="#sc"/></svg><span>Firefox</span></div>
        <div class="di"><svg viewBox="0 0 40 40"><use href="#windscribe"/><use href="#sc"/></svg><span>Windscribe</span></div>
        <div class="di"><svg viewBox="0 0 40 40"><use href="#fl"/><use href="#sc"/></svg><span>FL Studio 20</span></div>
        <div class="di di-none"></div>

        <div class="di"><svg viewBox="0 0 40 40"><use href="#cppdoc"/></svg><span>test.cpp</span></div>
        <div class="di"><svg viewBox="0 0 40 40"><use href="#word"/></svg><span>Escrito5.docx</span></div>
        <div class="di"><svg viewBox="0 0 40 40"><use href="#chrome"/><use href="#sc"/></svg><span>Google Chrome</span></div>
        <div class="di"><svg viewBox="0 0 40 40"><use href="#wolfram"/><use href="#sc"/></svg><span>Wolfram Mathemati...</span></div>
        <div class="di"><svg viewBox="0 0 40 40"><use href="#edge"/><use href="#sc"/></svg><span>Microsoft Edge</span></div>
        <div class="di di-none"></div>

        <div class="di"><svg viewBox="0 0 40 40"><use href="#pdf"/></svg><span>Malla Curricular I...</span></div>
        <div class="di"><svg viewBox="0 0 40 40"><use href="#tDoit"/></svg><span>DO IT!.png</span></div>
        <div class="di"><svg viewBox="0 0 40 40"><use href="#guitar"/><use href="#sc"/></svg><span>Guitar Rig 5</span></div>
        <div class="di"><svg viewBox="0 0 40 40"><use href="#blank"/><use href="#sc"/></svg><span>µTorrent</span></div>
        <div class="di"><svg viewBox="0 0 40 40"><use href="#folderpdf"/><use href="#sc"/></svg><span>MyCode - Shortcut</span></div>
        <div class="di di-none"></div>

        <div class="di"><svg viewBox="0 0 40 40"><use href="#pdf"/></svg><span>Sección Contenido ...</span></div>
        <div class="di"><svg viewBox="0 0 40 40"><use href="#tLogo"/></svg><span>LOGO DEFINITIVO...</span></div>
        <div class="di"><svg viewBox="0 0 40 40"><use href="#huion"/><use href="#sc"/></svg><span>HuionTablet</span></div>
        <div class="di"><svg viewBox="0 0 40 40"><use href="#yfolder"/><use href="#sc"/></svg><span>Accesos directo...</span></div>
        <div class="di"><svg viewBox="0 0 40 40"><use href="#vscode"/><use href="#sc"/></svg><span>Visual Studio Code</span></div>
        <div class="di di-none"></div>
      </div>

      <div class="vm">
        <div class="vm-top">
          <div class="vm-logo"><span class="l-voice">VOICE</span><span class="l-meeter">MEETER</span></div>
          <span class="l-banana">Banana</span>
          <div class="l-rs"><b>R</b><b>R</b><b>R</b><b>R</b><b class="l-a">A</b></div>
          <div class="l-www"><span>www.voicemeeter.com</span><span>www.vb-audio.com</span></div>
          <svg class="l-spk" viewBox="0 0 46 30" width="46" height="30"><g fill="none" stroke="#2b3d4f" stroke-width="1.600"><path d="M1 11h6v9H1zM7 11l8-6v21l-8-6z"/><path d="M45 11h-6v9h6zM39 11l-8-6v21l8-6z"/><path d="M19 4c0-3 2 0 2-3M23 4c0-3 2 0 2-3M27 4c0-3 2 0 2-3"/></g><g fill="#2b3d4f"><rect x="20" y="14" width="2.500" height="2.500"/><rect x="25" y="14" width="2.500" height="2.500"/></g></svg>
          <div class="l-vb"><span class="l-vb1">VB-AUDIO Software</span><span class="l-vb2">Audio Mechanic &amp; Sound Breeder</span></div>
          <div class="b-vban"><span>VBAN</span></div>
          <div class="b-menu">Menu</div>
          <div class="b-win b-min">_</div>
          <div class="b-win b-x">X</div>
        </div>
        <div class="vm-heads">
          <div class="h-col h-1"><div class="h-in"><div class="h-t">HARDWARE INPUT<em>1</em></div><div class="h-s h-bright">Microphone (2- USB Audio CC</div></div></div>
          <div class="h-col"><div class="h-in"><div class="h-t">HARDWARE INPUT<em>2</em></div><div class="h-s">Select Input Device</div></div></div>
          <div class="h-col"><div class="h-in"><div class="h-t">HARDWARE INPUT<em>3</em></div><div class="h-s">Select Input Device</div></div></div>
          <div class="h-col h-virt"><div class="h-in">
            <div class="h-t h-center">VIRTUAL INPUTS</div>
            <div class="h-vs"><div class="h-v"><span>Voicemeeter VAIO</span><small>44100 Hz - 7168</small></div><div class="h-v"><span>Voicemeeter AUX</span><small>44100 Hz - 7168</small></div></div>
          </div></div>
          <div class="h-col h-out">
            <div class="out-bus"><div><span>A1</span><i></i></div><div><span>A2</span><i></i></div><div><span>A3</span><i></i></div></div>
            <div class="out-txt">
              <div class="out-t"><b>HARDWARE OUT</b><span>44.1kHz | 512</span></div>
              <div class="out-d">Altavoces (Realtek High Definition Audio)</div>
              <div class="out-d">CABLE Input (VB-Audio Virtual C</div>
              <div class="out-d">Speakers (2- USB Audio CODEC )</div>
            </div>
          </div>
        </div>
        <div class="vm-body">
          <!-- hardware strip 1 -->
          <div class="strip strip-1">
            <div class="ipan"><b>INTELLI</b>PAN</div>
            <svg class="pad" viewBox="0 0 143 127" width="143" height="127"><polygon points="0,0 68,0 35,127 0,127" fill="#1e2b36"/><text x="8" y="15" class="pt-v">VOICE</text><text x="136" y="14" text-anchor="end" class="pt-c">Color Panel</text><path d="M70 17v99M9 59h124M67 21l3-4 3 4" fill="none" stroke="#3c4d5c"/><rect x="55" y="30" width="32" height="24" fill="#1a2732"/><text x="71" y="39" text-anchor="middle" class="pt-f">fx echo</text><text x="71" y="52" text-anchor="middle" class="pt-b">brightness</text><text x="8" y="116" class="pt-l">Lo</text><text x="135" y="116" text-anchor="end" class="pt-l">Hi</text><rect x="26" y="104" width="16" height="16" rx="3" fill="#ff6048"/></svg>
            <svg class="aud" viewBox="0 0 143 91" width="143" height="91"><text x="3" y="15" class="a-s">Comp.</text><text x="43" y="15" class="a-b">AUDIBILITY</text><text x="116" y="15" class="a-s">Gate</text><path d="M16 48H3V18h139v30h-12" fill="none" stroke="#3d5063"/><circle cx="40" cy="48" r="23" fill="#2b3d4f" stroke="#3d566c" stroke-width="3"/><circle cx="100" cy="48" r="23" fill="#2b3d4f" stroke="#3d566c" stroke-width="3"/><circle cx="30" cy="57" r="3.300" fill="#d8dde2"/><circle cx="90" cy="57" r="3.300" fill="#d8dde2"/><text x="40" y="52" text-anchor="middle" class="a-0">0</text><text x="100" y="52" text-anchor="middle" class="a-0">0</text></svg>
            <div class="lower">
              <div class="vu"><div class="vu-in"><i style="--lvl:35%"></i><i style="--lvl:35%"></i></div></div>
              <div class="fader"><div class="fill" style="--y:77px"></div><span class="fl">Fader Gain</span><div class="fk" style="--y:77px"><span>-6.0</span></div></div>
              <div class="bcol">
                <div class="vb arr on">A1</div><div class="vb arr on">A2</div><div class="vb arr">A3</div><div class="vb arr gap">B1</div><div class="vb arr">B2</div><div class="vb sm-t gap2">mono</div><div class="vb sm-t gap3">solo</div><div class="vb sm-t gap4">Mute</div>
              </div>
            </div>
          </div>
          <!-- hardware strip 2 -->
          <div class="strip">
            <div class="ipan"><b>INTELLI</b>PAN</div>
            <svg class="pad" viewBox="0 0 143 127" width="143" height="127"><polygon points="0,0 68,0 35,127 0,127" fill="#1e2b36"/><text x="8" y="15" class="pt-v">VOICE</text><text x="136" y="14" text-anchor="end" class="pt-c">Color Panel</text><path d="M70 17v99M9 59h124M67 21l3-4 3 4" fill="none" stroke="#3c4d5c"/><rect x="55" y="30" width="32" height="24" fill="#1a2732"/><text x="71" y="39" text-anchor="middle" class="pt-f">fx echo</text><text x="71" y="52" text-anchor="middle" class="pt-b">brightness</text><text x="8" y="116" class="pt-l">Lo</text><text x="135" y="116" text-anchor="end" class="pt-l">Hi</text><rect x="63" y="104" width="16" height="16" rx="3" fill="#7393ab"/></svg>
            <svg class="aud" viewBox="0 0 143 91" width="143" height="91"><text x="3" y="15" class="a-s">Comp.</text><text x="43" y="15" class="a-b">AUDIBILITY</text><text x="116" y="15" class="a-s">Gate</text><path d="M16 48H3V18h139v30h-12" fill="none" stroke="#3d5063"/><circle cx="40" cy="48" r="23" fill="#2b3d4f" stroke="#3d566c" stroke-width="3"/><circle cx="100" cy="48" r="23" fill="#2b3d4f" stroke="#3d566c" stroke-width="3"/><circle cx="30" cy="57" r="3.300" fill="#d8dde2"/><circle cx="90" cy="57" r="3.300" fill="#d8dde2"/><text x="40" y="52" text-anchor="middle" class="a-0">0</text><text x="100" y="52" text-anchor="middle" class="a-0">0</text></svg>
            <div class="lower">
              <div class="vu"><div class="vu-in"><i style="--lvl:0%"></i><i style="--lvl:0%"></i></div></div>
              <div class="fader red"><div class="fill" style="--y:54px"></div><span class="fl">Fader Gain</span><div class="fk" style="--y:54px"><span>3.0</span></div></div>
              <div class="bcol">
                <div class="vb arr">A1</div><div class="vb arr">A2</div><div class="vb arr">A3</div><div class="vb arr gap">B1</div><div class="vb arr">B2</div><div class="vb sm-t gap2">mono</div><div class="vb sm-t gap3">solo</div><div class="vb sm-t gap4">Mute</div>
              </div>
            </div>
          </div>
          <!-- hardware strip 3 -->
          <div class="strip">
            <div class="ipan"><b>INTELLI</b>PAN</div>
            <svg class="pad" viewBox="0 0 143 127" width="143" height="127"><polygon points="0,0 68,0 35,127 0,127" fill="#1e2b36"/><text x="8" y="15" class="pt-v">MODULATION</text><text x="136" y="15" text-anchor="end" class="pt-c">Fx Panel</text><path d="M37 17v99M70 17v99M104 17v99M9 28h125M9 59h125M9 91h125" fill="none" stroke="#3c4d5c"/><rect x="63" y="104" width="16" height="16" rx="3" fill="#7393ab"/></svg>
            <svg class="aud" viewBox="0 0 143 91" width="143" height="91"><text x="3" y="15" class="a-s">Comp.</text><text x="43" y="15" class="a-b">AUDIBILITY</text><text x="116" y="15" class="a-s">Gate</text><path d="M16 48H3V18h139v30h-12" fill="none" stroke="#3d5063"/><circle cx="40" cy="48" r="23" fill="#2b3d4f" stroke="#3d566c" stroke-width="3"/><circle cx="100" cy="48" r="23" fill="#2b3d4f" stroke="#3d566c" stroke-width="3"/><circle cx="30" cy="57" r="3.300" fill="#d8dde2"/><circle cx="90" cy="57" r="3.300" fill="#d8dde2"/><text x="40" y="52" text-anchor="middle" class="a-0">0</text><text x="100" y="52" text-anchor="middle" class="a-0">0</text></svg>
            <div class="lower">
              <div class="vu"><div class="vu-in"><i style="--lvl:0%"></i><i style="--lvl:0%"></i></div></div>
              <div class="fader"><div class="fill" style="--y:69px"></div><span class="fl">Fader Gain</span><div class="fk" style="--y:69px"><span>-3.0</span></div></div>
              <div class="bcol">
                <div class="vb arr">A1</div><div class="vb arr">A2</div><div class="vb arr">A3</div><div class="vb arr gap">B1</div><div class="vb arr">B2</div><div class="vb sm-t gap2">mono</div><div class="vb sm-t gap3">solo</div><div class="vb sm-t gap4">Mute</div>
              </div>
            </div>
          </div>
          <!-- virtual strips -->
          <div class="virt">
            <div class="vs vs-1">
              <svg class="eq" viewBox="0 0 109 165" width="109" height="165"><text x="55" y="16" text-anchor="middle" class="e-t">EQUALIZER</text><text x="82" y="34" text-anchor="middle" class="e-s">Treble</text><circle cx="32" cy="48" r="23" fill="none" stroke="#5fa98a" stroke-width="3"/><circle cx="76" cy="90" r="23" fill="none" stroke="#5fa98a" stroke-width="3"/><circle cx="32" cy="132" r="23" fill="none" stroke="#5fa98a" stroke-width="3"/><circle cx="45" cy="55" r="3.300" fill="#e0e3e6"/><circle cx="69" cy="77" r="3.300" fill="#e0e3e6"/><circle cx="43" cy="141" r="3.300" fill="#e0e3e6"/><text x="83" y="54" text-anchor="middle" class="e-n r">11.2</text><text x="24" y="96" text-anchor="middle" class="e-n g">-2.7</text><text x="83" y="138" text-anchor="middle" class="e-n r">12.0</text><text x="84" y="155" text-anchor="middle" class="e-s b">Bass</text></svg>
              <div class="v-mid">
                <svg class="pad2" viewBox="0 0 74 66" width="74" height="66"><polygon points="0,0 40,0 24,66 0,66" fill="#1e2b36"/><rect x="9" y="8" width="56" height="51" fill="none" stroke="#4c6072"/><text x="36" y="22" text-anchor="middle" class="p2">Front</text><text x="12" y="38" class="p2">L</text><text x="62" y="38" text-anchor="end" class="p2">R</text><text x="35" y="58" text-anchor="middle" class="p2">Rear</text><g fill="#6d8296"><rect x="4" y="4" width="7" height="7"/><rect x="62" y="4" width="7" height="7"/><rect x="4" y="56" width="7" height="7"/><rect x="62" y="56" width="7" height="7"/></g><circle cx="33" cy="8" r="5.300" fill="#ff6048"/></svg>
                <div class="vdot"></div>
              </div>
              <div class="lower lower-v">
                <div class="fader"><div class="fill" style="--y:61px"></div><span class="fl">Fader Gain</span><div class="fk" style="--y:61px"><span>0dB</span></div></div>
                <div class="bcol">
                  <div class="vb arr on">A1</div><div class="vb arr">A2</div><div class="vb arr on">A3</div><div class="vb arr gap">B1</div><div class="vb arr">B2</div><div class="vb sm-t gap2">M.C</div><div class="vb sm-t gap3">solo</div><div class="vb sm-t gap4">Mute</div>
                </div>
              </div>
            </div>
            <div class="vs vs-2">
              <svg class="eq" viewBox="0 0 113 165" width="113" height="165"><text x="60" y="17" text-anchor="middle" class="e-t">EQUALIZER</text><text x="84" y="34" text-anchor="middle" class="e-s">Treble</text><circle cx="35" cy="48" r="23" fill="none" stroke="#3f5a72" stroke-width="3"/><circle cx="78" cy="90" r="23" fill="none" stroke="#3f5a72" stroke-width="3"/><circle cx="35" cy="132" r="23" fill="none" stroke="#3f5a72" stroke-width="3"/><circle cx="35" cy="32" r="3.300" fill="#e0e3e6"/><circle cx="78" cy="74" r="3.300" fill="#e0e3e6"/><circle cx="35" cy="116" r="3.300" fill="#e0e3e6"/><text x="85" y="54" text-anchor="middle" class="e-n d">0.0</text><text x="27" y="96" text-anchor="middle" class="e-n d">0.0</text><text x="85" y="138" text-anchor="middle" class="e-n d">0.0</text><text x="86" y="155" text-anchor="middle" class="e-s b">Bass</text></svg>
              <div class="v-mid">
                <svg class="pad2" viewBox="0 0 75 66" width="75" height="66"><polygon points="0,0 40,0 24,66 0,66" fill="#1e2b36"/><rect x="9" y="8" width="56" height="51" fill="none" stroke="#4c6072"/><text x="37" y="22" text-anchor="middle" class="p2">Front</text><text x="12" y="38" class="p2">L</text><text x="63" y="38" text-anchor="end" class="p2">R</text><text x="36" y="58" text-anchor="middle" class="p2">Rear</text><g fill="#6d8296"><rect x="4" y="4" width="7" height="7"/><rect x="62" y="4" width="7" height="7"/><rect x="4" y="56" width="7" height="7"/><rect x="62" y="56" width="7" height="7"/></g><circle cx="37" cy="34" r="5.300" fill="#ff6048"/></svg>
                <div class="vdot"></div>
              </div>
              <div class="lower lower-v">
                <div class="fader"><div class="fill" style="--y:61px"></div><span class="fl">Fader Gain</span><div class="fk" style="--y:61px"><span>0dB</span></div></div>
                <div class="bcol">
                  <div class="vb arr on">A1</div><div class="vb arr">A2</div><div class="vb arr on">A3</div><div class="vb arr gap">B1</div><div class="vb arr">B2</div><div class="vb sm-t gap2 bold">K</div><div class="vb sm-t gap3">solo</div><div class="vb sm-t gap4">Mute</div>
                </div>
              </div>
            </div>
          </div>
          <!-- master -->
          <div class="master">
            <div class="rec">
              <div class="rec-left">
                <div class="deck">
                  <div class="deck-main">
                    <div class="d-label"><b>Click to Select Audio file for Playback</b><span>Or click on Record Button below</span></div>
                    <div class="d-row">
                      <svg viewBox="0 0 38 24" width="38" height="24"><rect width="38" height="24" fill="url(#pB)"/><rect x="15" width="23" height="14" fill="url(#pG)"/><rect width="12" height="6" fill="url(#pC)"/></svg>
                      <svg class="reel" viewBox="0 0 22 22" width="22" height="22"><circle cx="11" cy="11" r="11" fill="#c9d6df"/><circle cx="11" cy="11" r="8" fill="#27323c"/><g fill="#c9d6df"><circle cx="11" cy="6" r="1.500"/><circle cx="11" cy="16" r="1.500"/><circle cx="6.700" cy="8.500" r="1.500"/><circle cx="15.300" cy="8.500" r="1.500"/><circle cx="6.700" cy="13.500" r="1.500"/><circle cx="15.300" cy="13.500" r="1.500"/></g></svg>
                      <div class="d-time">00:00</div>
                      <svg class="reel reel2" viewBox="0 0 22 22" width="22" height="22"><circle cx="11" cy="11" r="11" fill="#c9d6df"/><circle cx="11" cy="11" r="8" fill="#27323c"/><g fill="#c9d6df"><circle cx="11" cy="6" r="1.500"/><circle cx="11" cy="16" r="1.500"/><circle cx="6.700" cy="8.500" r="1.500"/><circle cx="15.300" cy="8.500" r="1.500"/><circle cx="6.700" cy="13.500" r="1.500"/><circle cx="15.300" cy="13.500" r="1.500"/></g></svg>
                      <div class="d-input"><span>input</span><i></i></div>
                    </div>
                    <div class="d-prog"></div>
                    <svg class="d-tape" viewBox="0 0 223 29" width="223" height="29"><path d="M45 0h130l8 29H38z" fill="#5d6b77" stroke="#6f7d89"/><text x="50" y="14" class="tp">44100 Hz</text><text x="172" y="14" text-anchor="end" class="tp">2 Ch</text><g fill="#20262c"><circle cx="111" cy="13" r="3.500"/><circle cx="54" cy="25" r="3.500"/><circle cx="72" cy="22" r="3.500"/><circle cx="149" cy="23" r="3.500"/><circle cx="166" cy="25" r="3.500"/></g></svg>
                  </div>
                  <div class="transport">
                    <div><svg viewBox="0 0 16 14" width="16" height="14"><path d="M8 1L1 7l7 6zM15 1L8 7l7 6z" fill="#7a93a8"/></svg></div>
                    <div><svg viewBox="0 0 16 14" width="16" height="14"><path d="M1 1l7 6-7 6zM8 1l7 6-7 6z" fill="#7a93a8"/></svg></div>
                    <div><svg viewBox="0 0 10 16" width="10" height="16"><path d="M1 1l8 7-8 7z" fill="#7a93a8"/></svg></div>
                    <div class="t-on"><i></i></div>
                    <div><svg viewBox="0 0 12 12" width="12" height="12"><circle cx="6" cy="6" r="5" fill="#7a93a8"/></svg></div>
                  </div>
                </div>
              </div>
              <div class="rec-right">
                <div class="vb arr on rb2">A1</div><div class="vb arr on rb2">A2</div><div class="vb arr on rb2">A3</div><div class="vb arr on rb2 gap-b">B1</div><div class="vb arr on rb2">B2</div>
              </div>
            </div>
            <div class="ms-title"><i></i><span>MASTER SECTION</span><i></i></div>
            <div class="ms-grid">
              <div class="ms">
                <div class="ms-b">
                  <div class="vb mode"><span>Normal<br>mode</span><i></i></div><div class="vb m1">mono</div><div class="vb m2">EQ</div><div class="vb m3">Mute</div>
                </div>
                <div class="ms-low">
                  <div class="ms-vu"><em>-38</em><span>A1</span><div class="vdot tall"><i style="height:52px"></i></div></div>
                  <div class="fader mf"><div class="fill" style="--y:56px"></div><span class="fl">Fader Gain</span><div class="fk" style="--y:56px"><span>-6.0</span></div></div>
                </div>
              </div>
              <div class="ms">
                <div class="ms-b">
                  <div class="vb mode"><span>Normal<br>mode</span><i></i></div><div class="vb m1">mono</div><div class="vb m2">EQ</div><div class="vb m3">Mute</div>
                </div>
                <div class="ms-low">
                  <div class="ms-vu"><em>-23</em><span>A2</span><div class="vdot tall"><i style="height:74px"></i></div></div>
                  <div class="fader mf red"><div class="fill" style="--y:33px"></div><span class="fl">Fader Gain</span><div class="fk" style="--y:33px"><span>9.0</span></div></div>
                </div>
              </div>
              <div class="ms">
                <div class="ms-b">
                  <div class="vb mode"><span>Normal<br>mode</span><i></i></div><div class="vb m1">mono</div><div class="vb m2">EQ</div><div class="vb m3">Mute</div>
                </div>
                <div class="ms-low">
                  <div class="ms-vu"><em>-79</em><span>A3</span><div class="vdot tall"></div></div>
                  <div class="fader mf"><div class="fill" style="--y:50px"></div><span class="fl">Fader Gain</span><div class="fk" style="--y:50px"><span>-1.7</span></div></div>
                </div>
              </div>
              <div class="ms ms-4">
                <div class="ms-b">
                  <div class="vb mode"><span>Normal<br>mode</span><i></i></div><div class="vb m1">mono</div><div class="vb m2">EQ</div><div class="vb m3">Mute</div>
                </div>
                <div class="ms-low">
                  <div class="ms-vu"><em>&nbsp;</em><span>B1</span><div class="vdot tall"></div></div>
                  <div class="fader mf"><div class="fill" style="--y:48px"></div><span class="fl">Fader Gain</span><div class="fk" style="--y:48px"><span>0dB</span></div></div>
                </div>
              </div>
              <div class="ms">
                <div class="ms-b">
                  <div class="vb mode"><span>Normal<br>mode</span><i></i></div><div class="vb m1">mono</div><div class="vb m2">EQ</div><div class="vb m3">Mute</div>
                </div>
                <div class="ms-low">
                  <div class="ms-vu"><em>&nbsp;</em><span>B2</span><div class="vdot tall"></div></div>
                  <div class="fader mf"><div class="fill" style="--y:48px"></div><span class="fl">Fader Gain</span><div class="fk" style="--y:48px"><span>0dB</span></div></div>
                </div>
              </div>
            </div>
            <div class="ms-foot">
              <div class="mf-g mf-p"><i></i><span>PHYSICAL</span><i></i></div>
              <div class="mf-g mf-v"><i></i><span>VIRTUAL</span><i></i></div>
            </div>
          </div>
        </div>
      </div>
    </section>
  </div>

  <footer class="taskbar">
    <div class="tb-half">
      <div class="tbi tb-start"><svg viewBox="0 0 18 18" width="18" height="18"><path d="M0 2.500l7.500-1v7H0zM8.500 1.300L18 0v8.500H8.500zM0 9.500h7.500v7L0 15.500zM8.500 9.500H18V18l-9.500-1.300z" fill="#fff"/></svg></div>
      <div class="tbi"><svg viewBox="0 0 18 18" width="18" height="18"><circle cx="9" cy="9" r="7" fill="none" stroke="#eee" stroke-width="2.200"/></svg></div>
      <div class="tbi tb-edge"><svg viewBox="0 0 40 40" width="26" height="26"><use href="#edge"/></svg></div>
      <div class="tbi on"><svg viewBox="0 0 40 40" width="24" height="24"><use href="#chrome"/></svg></div>
      <div class="tbi on"><div class="vmtb"><span>VOICE</span><span>MEETER</span></div></div>
      <div class="tbi on"><svg viewBox="0 0 40 40" width="26" height="26"><use href="#yfolder" transform="translate(-6 0)"/></svg></div>
      <div class="tbi on"><svg viewBox="0 0 40 40" width="24" height="24"><use href="#vscode"/></svg></div>
      <div class="tbi on act"><svg viewBox="0 0 28 30" width="26" height="28"><use href="#palette"/></svg></div>
      <div class="tb-pen"><svg viewBox="0 0 16 22" width="16" height="22"><path d="M3 21c-3-2-2-7 0-8l7-10c2-2 4-1 3 2L6 17c-1 1-2 0-1-1l7-9M10 11c2 0 4-1 5-2" fill="none" stroke="#eee"/></svg></div>
    </div>
    <div class="tb-half">
      <div class="tbi tb-start"><svg viewBox="0 0 18 18" width="18" height="18"><path d="M0 2.500l7.500-1v7H0zM8.500 1.300L18 0v8.500H8.500zM0 9.500h7.500v7L0 15.500zM8.500 9.500H18V18l-9.500-1.300z" fill="#fff"/></svg></div>
      <div class="tbi"><svg viewBox="0 0 18 18" width="18" height="18"><circle cx="9" cy="9" r="7" fill="none" stroke="#eee" stroke-width="2.200"/></svg></div>
      <div class="tbi tb-edge"><svg viewBox="0 0 40 40" width="26" height="26"><use href="#edge"/></svg></div>
      <div class="tbi on"><svg viewBox="0 0 40 40" width="24" height="24"><use href="#chrome"/></svg></div>
      <div class="tbi on"><div class="vmtb"><span>VOICE</span><span>MEETER</span></div></div>
      <div class="tbi on"><svg viewBox="0 0 40 40" width="26" height="26"><use href="#yfolder" transform="translate(-6 0)"/></svg></div>
      <div class="tbi on"><svg viewBox="0 0 40 40" width="24" height="24"><use href="#vscode"/></svg></div>
      <div class="tbi on act"><svg viewBox="0 0 28 30" width="26" height="28"><use href="#palette"/></svg></div>
      <div class="tray">
        <svg viewBox="0 0 14 8" width="14" height="8"><path d="M1 7l6-6 6 6" fill="none" stroke="#eee" stroke-width="1.200"/></svg>
        <svg viewBox="0 0 14 18" width="14" height="18"><rect x="1.500" y="5" width="7" height="8" rx="1" fill="none" stroke="#eee"/><path d="M8.500 8l4-2v6l-4-2" fill="none" stroke="#eee"/><path d="M2 2c2-1 5-1 7 0M2 16c2 1 5 1 7 0" fill="none" stroke="#aaa"/></svg>
        <svg viewBox="0 0 12 18" width="12" height="18"><rect x="3" y="0" width="6" height="12" rx="3" fill="#eee"/><path d="M1 8c0 7 10 7 10 0M6 14v3M3 17h6" fill="none" stroke="#eee"/></svg>
        <svg viewBox="0 0 16 14" width="16" height="14"><path d="M1 5h3l4-3v10L4 9H1z" fill="none" stroke="#eee"/><path d="M10 4c1.500 2 1.500 4 0 6" fill="none" stroke="#eee"/><path d="M12 2c2.500 3 2.500 7 0 10M14 1c3 4 3 8 0 12" fill="none" stroke="#777"/></svg>
        <svg viewBox="0 0 16 12" width="16" height="12"><rect x="4" y="3" width="11" height="7" fill="none" stroke="#eee"/><rect x="5.500" y="4.500" width="8" height="4" fill="#eee"/><path d="M0 3h5M1 1v2M3.500 1v2M2.500 4v4" stroke="#eee"/></svg>
        <svg viewBox="0 0 14 14" width="14" height="14"><path d="M1 13a12 12 0 0 1 12-12M3.500 13a9.500 9.500 0 0 1 9.500-9.500" fill="none" stroke="#bbb"/><path d="M6 13a7 7 0 0 1 7-7M8.500 13a4.500 4.500 0 0 1 4.500-4.500" fill="none" stroke="#eee"/><circle cx="11.500" cy="11.500" r="1.500" fill="#eee"/></svg>
        <svg viewBox="0 0 16 16" width="16" height="16"><path d="M3 15c-3-2-2-6 0-7l5-6c2-2 4-1 3 1L5 12c-1 1-2 0-1-1l5-6M8 9c2 0 4-1 5-2" fill="none" stroke="#eee"/></svg>
        <span class="tray-eng">ENG</span>
        <div class="tray-note"><svg viewBox="0 0 16 16" width="16" height="16"><path d="M0 1h16v11H6l-3 3v-3H0z" fill="#f4f4f4"/><path d="M2 4h11M2 6.500h11M2 9h8" stroke="#222"/></svg><b>1</b></div>
      </div>
    </div>
  </footer>
</div>
</body>
</html>
```
FILE: styles.css
```css
* { box-sizing: border-box; }
html, body { margin: 0; height: 100%; background: #fff; overflow: hidden; }
body { font-family: "Open Sans", "Liberation Sans", sans-serif; }
.defs { position: absolute; width: 0; height: 0; }
.ict { font-family: "Liberation Sans", sans-serif; font-weight: 700; text-anchor: middle; }
i { display: block; }

.screen { width: 3200px; height: 900px; display: flex; flex-direction: column; background: #000; }
.top { flex: 1; display: flex; min-height: 0; }

/* PAINT */
.paint { width: 1600px; flex: none; display: flex; flex-direction: column; background: #fff; font-size: 11.5px; color: #2a2a2a; }
.p-title { height: 23px; display: flex; align-items: center; }
.p-qa { flex: none; }
.p-name { margin-left: 3px; font-size: 12px; color: #111; }
.p-wc { margin-left: auto; margin-right: 14px; }
.p-tabs { height: 24px; display: flex; align-items: stretch; position: relative; border-bottom: 1px solid #dadbdc; }
.tab { width: 56px; display: flex; align-items: center; justify-content: center; font-size: 12px; }
.tab-file { background: #1979ca; color: #fff; }
.tab-home { width: 58px; background: #f5f6f7; border: 1px solid #dadbdc; border-bottom: none; margin-bottom: -1px; }
.p-help { margin-left: auto; }

.ribbon { height: 92px; flex: none; display: flex; background: #f5f6f7; border-bottom: 2px solid #dfe0e2; }
.rg { flex: none; display: flex; flex-direction: column; margin: 3px 0; height: 85px; border-right: 1px solid #dadbdc; }
.rg-clip { width: 107px; }
.rg-img { width: 122px; }
.rg-tools { width: 81px; }
.rg-brush { width: 56px; }
.rg-shapes { width: 245px; }
.rg-size { width: 54px; }
.rg-colors { width: 357px; }
.rg-p3d { width: 61px; }
.rb { flex: 1; display: flex; padding-top: 4px; min-height: 0; }
.rl { height: 16px; line-height: 16px; text-align: center; color: #5f5f5f; flex: none; margin-bottom: 0; position: relative; top: -1px; }
.rl-empty { visibility: hidden; }

.big, .big2 { display: flex; flex-direction: column; align-items: center; flex: none; }
.big span, .big2 span { display: block; margin-top: 3px; line-height: 14px; text-align: center; }
.dn { width: 0; height: 0; border: 3px solid transparent; border-top: 4px solid #333; border-bottom: none; margin-top: 3px; }
.dn-in { margin: 1px 0 0 3px; }
.dn-off { border-top-color: #999; }
.b-paste { width: 38px; margin-left: 7px; }
.b-select { width: 44px; margin-left: 3px; }
.b-size { width: 53px; }
.b-edit { width: 40px; margin-left: 1px; }
.b-p3d { width: 56px; }
.sm { display: flex; flex-direction: column; margin-top: -3px; margin-left: 4px; }
.smr { height: 22px; display: flex; align-items: center; gap: 4px; }
.smr svg { flex: none; }
.smr.off { color: #8b8b8b; }
.toolgrid { display: grid; grid-template-columns: repeat(3, 25px); grid-auto-rows: 27px; padding-top: 3px; justify-items: center; align-items: center; }
.t-a { font: 700 21px "Liberation Serif", serif; color: #1d3658; }
.brush { width: 45px; height: 64px; margin: -3px 0 0 3px; border: 1px solid #7db3df; display: flex; flex-direction: column; background: #cde4f7; }
.brush-up { height: 36px; display: flex; align-items: center; justify-content: center; border-bottom: 1px solid #7db3df; background: #d7eafa; }
.brush-lo { flex: 1; display: flex; flex-direction: column; align-items: center; padding-top: 0; line-height: 14px; font-size: 11px; }
.gallery { width: 157px; height: 60px; margin-left: 4px; display: flex; background: #fff; border: 1px solid #dcdcdc; flex: none; }
.gallery svg { flex: none; }
.gal-scroll { width: 14px; margin-left: auto; border-left: 1px solid #dcdcdc; display: flex; flex-direction: column; align-items: center; justify-content: space-around; background: #f2f2f2; }
.gal-scroll .dn { margin: 0; }
.gal-scroll .up { width: 0; height: 0; border: 3px solid transparent; border-bottom: 4px solid #aaa; border-top: none; }
.gal-scroll .more { width: 7px; height: 5px; border-top: 1px solid #333; border-bottom: 3px solid #333; }
.sm-ol { margin-left: 6px; }
.col1 { width: 42px; height: 66px; margin: -3px 0 0 3px; border: 1px solid #7db3df; background: #cde4f7; display: flex; flex-direction: column; align-items: center; flex: none; }
.sw1 { width: 32px; height: 32px; margin-top: 2px; background: #000; border: 2px solid #8f8f8f; outline: 1px solid #fff; outline-offset: -3px; }
.col1 span, .col2 span { margin-top: 2px; line-height: 14px; text-align: center; }
.col2 { width: 38px; margin-left: 2px; display: flex; flex-direction: column; align-items: center; flex: none; }
.sw2 { width: 24px; height: 24px; margin: 4px 0 5px; background: #fff; border: 1px solid #8f8f8f; }
.palette { display: grid; grid-template-columns: repeat(10, 20px); grid-auto-rows: 20px; column-gap: 2px; row-gap: 2px; margin: -2px 0 0 3px; flex: none; height: 64px; }
.palette span { border: 1px solid #a0a0a0; background: transparent; box-shadow: inset 0 0 0 1px #fff; }

.p-canvas { flex: 1; min-height: 0; padding: 5px; position: relative; background: linear-gradient(#c7d0e1, #dde7f3); }
.sheet { width: 493px; height: 88px; background: #fff; position: relative; box-shadow: 7px 8px 4px #aebbcd; }
.hd { position: absolute; width: 5px; height: 5px; background: #fff; border: 1px solid #555; }
.hd-r { left: 494px; top: 42px; }
.hd-b { left: 245px; top: 88px; }
.hd-c { left: 494px; top: 88px; }

.p-status { height: 26px; flex: none; display: flex; align-items: center; background: #f0f0f0; border-top: 1px solid #d9d9d9; font-size: 12px; color: #111; }
.st { height: 24px; display: flex; align-items: center; gap: 4px; border-right: 1px solid #d9d9d9; padding-left: 2px; flex: none; }
.st1 { width: 156px; }
.st2 { width: 157px; padding-left: 5px; }
.st3 { width: 155px; padding-left: 3px; }
.st4 { width: 157px; }
.st-zoom { margin-left: auto; height: 24px; display: flex; align-items: center; border-left: 1px solid #d9d9d9; padding-left: 12px; width: 199px; flex: none; }
.zp { width: 44px; flex: none; font-size: 11.5px; }
.zs { width: 84px; height: 4px; margin: 0 12px; background: #e2e2e2; border: 1px solid #ccc; position: relative; flex: none; }
.zs i { position: absolute; left: 0; top: -7px; width: 10px; height: 17px; background: #0a78d7; clip-path: polygon(0 0, 100% 0, 100% 70%, 50% 100%, 0 70%); }

/* DESKTOP */
.desk { flex: 1; position: relative; background: #000; overflow: hidden; }
.icons { display: grid; grid-template-columns: repeat(6, 76px); grid-auto-rows: 92px; margin-left: -1px; }
.di { display: flex; flex-direction: column; align-items: center; padding-top: 8px; color: #fff; font-size: 11.5px; line-height: 15px; text-align: center; }
.di svg { width: 40px; height: 40px; flex: none; overflow: visible; }
.di span { margin-top: 3px; width: 74px; display: block; }
.di-none { visibility: hidden; }

/* VOICEMEETER */
.vm { position: absolute; left: 511px; top: 49px; width: 1022px; height: 618px; background: #2c3e50; border-left: 1px solid #55697c; font-family: "Liberation Sans", sans-serif; display: flex; flex-direction: column; }
.vm-top { height: 47px; flex: none; display: flex; align-items: flex-start; padding: 10px 0 0 11px; background: #374a5d; }
.vm-logo { display: flex; margin-top: 2px; align-items: center; flex: none; }
.l-voice { width: 49px; height: 19px; background: #ff5c3e; color: #fff; font: 700 15px/19px Roboto, sans-serif; text-align: center; }
.l-meeter { margin-left: 4px; width: 47px; color: #ccd3da; font: 700 13.500px/19px Roboto, sans-serif; letter-spacing: -.2px; white-space: nowrap; }
.l-banana { margin: 0 0 0 13px; width: 57px; font: italic 700 17px/22px "Liberation Serif", serif; color: #ffea1c; letter-spacing: .1px; flex: none; }
.l-rs { display: flex; gap: 2px; margin: 3px 0 0 18px; flex: none; }
.l-rs b { width: 18px; height: 17px; border: 1.500px solid #0f1418; border-radius: 5px; color: #0f1418; font: 700 12px/14px Roboto, sans-serif; text-align: center; }
.l-rs .l-a { margin-left: 5px; }
.l-www { width: 156px; margin: -1px 0 0 29px; display: flex; flex-direction: column; align-items: flex-end; font: 700 12.400px/14px "DejaVu Sans", sans-serif; color: #2f4052; flex: none; white-space: nowrap; }
.l-spk { margin: -6px 0 0 9px; flex: none; }
.l-vb { width: 170px; margin: -7px 0 0 11px; display: flex; flex-direction: column; flex: none; color: #2f4052; }
.l-vb1 { font: 700 15.700px/20px "DejaVu Sans", sans-serif; letter-spacing: -.4px; white-space: nowrap; }
.l-vb2 { font: italic 700 12px/16px "Liberation Serif", serif; white-space: nowrap; }
.b-vban { width: 64px; height: 22px; margin: 3px 0 0 39px; background: #5b7084; padding: 0 8px; flex: none; }
.b-vban span { display: block; height: 22px; background: #34485b; color: #b9c6d1; font: 700 13px/22px Roboto, sans-serif; text-align: center; }
.b-menu { width: 83px; height: 24px; margin: 2px 0 0 14px; border: 1px solid #7d90a2; border-radius: 4px; background: #2f4255; color: #aebcc9; font: 700 13px/22px Roboto, sans-serif; text-align: center; flex: none; }
.b-win { width: 33px; height: 29px; background: #647a8d; color: #dfe5ea; text-align: center; font: 400 22px/24px "Liberation Sans", sans-serif; flex: none; }
.b-min { margin-left: 17px; }
.b-x { margin-left: 7px; }

.vm-heads { height: 48px; flex: none; display: grid; grid-template-columns: 158px 160px 160px 223px 320px; background: #374a5d; }
.h-col { padding: 2px 0 0 7px; }
.h-1 { padding-left: 5px; }
.h-in { height: 36px; border-right: 1px solid #5a6d80; }
.h-t { font: 700 14.500px/18px Roboto, sans-serif; color: #6583a3; letter-spacing: -.7px; white-space: nowrap; }
.h-t em { font: 400 15px/18px Roboto, sans-serif; margin-left: 7px; color: #7d93a9; letter-spacing: 0; }
.h-s { margin-top: 1px; margin-left: -1px; font: 400 10.300px/16px "Open Sans", sans-serif; color: #7a90a6; white-space: nowrap; }
.h-bright { color: #c5cfd9; margin-left: 0; font-size: 10.400px; }
.h-virt { padding-left: 7px; }
.h-center { text-align: center; padding-right: 10px; }
.h-vs { display: flex; margin: 1px 0 0 -9px; }
.h-v { width: 110px; display: flex; flex-direction: column; align-items: center; font: 400 10.400px/15px "Open Sans", sans-serif; color: #c5cfd9; white-space: nowrap; }
.h-v small { font-size: 10.500px; line-height: 9px; color: #5e7183; }
.h-out { display: flex; padding: 4px 0 0 13px; }
.out-bus { display: flex; gap: 4px; flex: none; }
.out-bus div { width: 29px; height: 35px; background: #2f4356; border: 1px solid #53708c; display: flex; flex-direction: column; align-items: center; color: #b4c1ce; font: 700 14px/20px Roboto, sans-serif; }
.out-bus i { width: 0; height: 0; border: 5px solid transparent; border-top: 5px solid #8ea4b8; border-bottom: none; margin-top: 3px; }
.out-txt { margin-left: 9px; flex: none; width: 210px; }
.out-t { display: flex; gap: 6px; align-items: baseline; height: 15px; margin-top: -3px; white-space: nowrap; }
.out-t b { font: 700 14.500px/18px Roboto, sans-serif; color: #6583a3; letter-spacing: -.85px; }
.out-t span { font: 400 16.500px/18px Roboto, sans-serif; color: #647f9c; }
.out-d { font: 400 10.600px/13px "Open Sans", sans-serif; color: #bac7d3; white-space: nowrap; }
.out-d:first-of-type { margin-top: 4px; }

.vm-body { flex: 1; min-height: 0; display: grid; grid-template-columns: 158px 160px 160px 222px 321px; }
.strip { margin-top: 9px; height: 492px; border-right: 1px solid #5a6d80; padding-left: 8px; }
.strip-1 { padding-left: 6px; }
.ipan { height: 22px; width: 143px; text-align: center; font: 400 12.500px/22px Roboto, sans-serif; color: #65788b; margin-bottom: 4px; letter-spacing: -.1px; }
.ipan b { color: #70879b; }
.pad { display: block; border-radius: 10px; background: #13202b; }
.pt-v { font: 400 13px Roboto, sans-serif; fill: #596d7e; letter-spacing: -.2px; }
.pt-c { font: 400 11px Roboto, sans-serif; fill: #8d9dab; }
.pt-f { font: 400 10px "Liberation Sans", sans-serif; fill: #7d8d99; }
.pt-b { font: 400 10px "Liberation Sans", sans-serif; fill: #3e4f5e; }
.pt-l { font: 400 11px "Liberation Sans", sans-serif; fill: #34485a; }
.aud { display: block; }
.a-s { font: 400 12px Roboto, sans-serif; fill: #6d8ba8; }
.a-b { font: 700 12px Roboto, sans-serif; fill: #6c8196; }
.a-0 { font: 400 11px "Liberation Sans", sans-serif; fill: #5f84a6; }

.lower { display: flex; height: 248px; }
.vu { width: 38px; height: 248px; margin-left: -1px; padding: 5px 4px; background: #1b2a37; border-radius: 6px; flex: none; }
.vu-in { height: 239px; background: #050505; display: flex; gap: 3px; padding: 2px 3px 0; }
.vu-in i { flex: 1; height: 234px; background: repeating-linear-gradient(to bottom, #0000 0 5px, #000 5px 6px), linear-gradient(to top, #8fbcc9 var(--lvl), #191919 var(--lvl), #191919 86%, #2a1616 86%); }

.fader { width: 20px; height: 249px; position: relative; margin-left: 21px; border: 1px solid #6fc79b; border-radius: 10px; flex: none; --c: #6fc79b; --t: #27724f; }
.fader.red { border-color: #ff6048; --c: #ff6048; --t: #ab2416; }
.fill { position: absolute; left: -1px; right: -1px; bottom: -1px; top: var(--y); background: var(--c); border-radius: 0 0 10px 10px; }
.fl { position: absolute; left: -2px; right: -2px; bottom: 13px; writing-mode: vertical-rl; transform: rotate(180deg); font: 400 14.500px/22px "Liberation Sans", sans-serif; letter-spacing: 1.150px; color: var(--t); text-align: left; white-space: nowrap; display: flex; align-items: center; justify-content: flex-start; }
.fk { position: absolute; left: 50%; top: var(--y); width: 46px; height: 46px; margin: -24px 0 0 -23px; border-radius: 50%; border: 3px solid var(--c); background: linear-gradient(112deg, #66788a 0 47%, #7a8c9b 47% 60%, #66788a 60%); display: flex; align-items: center; justify-content: center; }
.fk span { min-width: 28px; height: 14px; padding: 0 3px; border-radius: 6px; background: #4b5b6b; color: #fff; font: 700 12px/14px "Liberation Sans", sans-serif; text-align: center; }
.fader.red .fk { border-color: #e8503a; }

.bcol { width: 41px; margin-left: 20px; display: flex; flex-direction: column; flex: none; }
.vb { height: 25px; margin-bottom: 4px; flex: none; border: 1px solid #45607a; border-radius: 8px; color: #4f687f; display: flex; align-items: center; justify-content: center; font: 400 16px/1 "Liberation Sans", sans-serif; }
.vb.on { border-color: #6fc79b; color: #6fc79b; }
.arr::before { content: ""; width: 0; height: 0; margin-right: 2px; border: 5px solid transparent; border-left: 6px solid currentColor; border-right: none; }
.vb.gap { margin-top: 4px; }
.sm-t { font-size: 14px; }
.gap2 { margin-top: 9px; }
.gap3 { margin-top: 5px; }
.gap4 { margin-top: 1px; }
.bold { font-weight: 700; }

.virt { margin-top: 0; display: grid; grid-template-columns: 109px 113px; }
.vs { position: relative; padding-top: 9px; }
.vs-1::after { content: ""; position: absolute; right: 0; top: 170px; height: 158px; border-right: 1px solid #4a5e71; }
.eq { display: block; }
.e-t { font: 700 12px Roboto, sans-serif; fill: #647a8f; letter-spacing: -.2px; }
.e-s { font: 400 12px Roboto, sans-serif; fill: #5e8ea8; }
.e-s.b { fill: #5a84b0; }
.e-n { font: 400 16px Roboto, sans-serif; letter-spacing: -.3px; }
.e-n.r { fill: #ff6048; }
.e-n.g { fill: #6fc79b; }
.e-n.d { fill: #5e7c96; }
.v-mid { display: flex; height: 66px; margin: 4px 0 9px 7px; gap: 5px; }
.pad2 { border-radius: 7px; background: #13202b; flex: none; display: block; }
.p2 { font: 400 10.500px Roboto, sans-serif; fill: #9aa8b4; }
.vdot { width: 17px; height: 66px; flex: none; border-radius: 3px; background: repeating-linear-gradient(to bottom, #1d1d1d 0 2px, #0c0c0c 2px 3px); display: flex; align-items: flex-end; padding-left: 3px; }
.vdot i { width: 4px; background: repeating-linear-gradient(to bottom, #9fd0dc 0 2px, #182028 2px 3px); }
.vdot.tall { height: 142px; }
.lower-v .fader { margin-left: 22px; }
.lower-v .bcol { margin-left: 19px; }
.vs-2 .lower-v .fader { margin-left: 24px; }
.vs-2 .lower-v .bcol { margin-left: 20px; }

.master { border-left: 2px solid #0c1014; box-shadow: inset 1px 0 0 #5a6d80; padding-top: 12px; padding-left: 1px; }
.rec { display: flex; align-items: flex-start; width: 300px; height: 166px; margin-left: 8px; }
.rec-left { width: 249px; height: 166px; background: linear-gradient(100deg, #2a3b49, #1d2d3a 30%); border-radius: 14px 0 0 14px; padding: 12px 0 0 14px; flex: none; }
.rec-right { width: 51px; height: 151px; background: #1d2d3a; border-radius: 0 14px 14px 0; padding: 11px 0 0 3px; flex: none; display: flex; flex-direction: column; }
.deck { width: 225px; height: 153px; background: #0e1013; border-radius: 6px 6px 0 0; padding: 2px 1px 0; display: flex; flex-direction: column; }
.deck-main { height: 119px; flex: none; background: linear-gradient(120deg, #5f6d79, #45505a); border-radius: 4px; padding: 3px 0 0 5px; display: flex; flex-direction: column; }
.d-label { width: 213px; height: 33px; margin-left: -1px; padding-left: 5px; background: #dbdcc6; border-radius: 5px; display: flex; flex-direction: column; font: 400 10.800px/15px "Liberation Sans", sans-serif; flex: none; white-space: nowrap; }
.d-label b { font-weight: 400; color: #111; margin-top: 1px; }
.d-label span { color: #68685e; }
.d-row { width: 209px; height: 26px; margin-top: 5px; background: #4a5762; display: flex; align-items: center; padding-left: 3px; flex: none; }
.d-row svg { flex: none; }
.reel { margin-left: 7px; }
.reel2 { margin-left: 6px; }
.d-time { width: 59px; height: 22px; margin-left: 6px; background: #2f2f2f; border: 1px solid #46535e; color: #e0e0e0; font: 400 12px/20px "Liberation Sans", sans-serif; text-align: center; flex: none; }
.d-input { width: 38px; height: 24px; margin-left: 8px; border: 1px solid #ff6048; border-radius: 4px; color: #ff6048; font: 400 11px/13px "Liberation Sans", sans-serif; text-align: center; flex: none; }
.d-input span { display: block; }
.d-input i { width: 30px; height: 6px; margin: 1px auto 0; border-radius: 3px; background: radial-gradient(circle at 3px 3px, #ff6048 2.800px, #0000 3px) 0 0 / 6px 6px; }
.d-prog { width: 207px; height: 16px; margin: 2px 0 0 2px; background: #555; border: 1px solid #6f7377; flex: none; }
.d-tape { display: block; margin: 4px 0 0 -5px; flex: none; }
.tp { font: 400 11.500px "Liberation Sans", sans-serif; fill: #cfd6dc; }
.transport { display: flex; gap: 2px; margin-top: 3px; height: 30px; flex: none; }
.transport div { width: 39px; flex: none; background: #122230; border: 1px solid #566a7c; border-radius: 4px; display: flex; align-items: center; justify-content: center; }
.transport .t-on { width: 57px; background: #738a9e; }
.t-on i { width: 9px; height: 9px; background: #fff; }
.rb2 { width: 35px; height: 21px; margin-bottom: 3px; border-radius: 8px; font-size: 14px; }
.gap-b { margin-top: 3px; }

.ms-title { display: flex; align-items: flex-end; height: 20px; margin: 8px 0 0 8px; width: 300px; gap: 2px; color: #67798c; font: 700 15px/18px Roboto, sans-serif; letter-spacing: -.3px; }
.ms-title i { flex: 1; height: 1px; margin-bottom: 3px; background: #5a6d80; }
.ms-title span { white-space: nowrap; padding: 0 1px; }
.ms-grid { display: grid; grid-template-columns: repeat(5, 62px); margin: 2px 0 0 4px; height: 295px; }
.ms { border-right: 1px solid #4a5e71; }
.ms:last-child { border-right: none; }
.ms-b { display: flex; flex-direction: column; width: 41px; margin-left: 9px; }
.ms-4 .ms-b { margin-left: 11px; }
.ms-b .vb { margin: 0; font-size: 14px; }
.ms-b .mode { height: 36px; flex-direction: column; color: #36d6ef; font: 400 11px/9.500px "Open Sans", sans-serif; border-color: #45607a; }
.ms-b .mode span { text-align: center; display: block; margin-top: 2px; }
.ms-b .mode i { width: 28px; height: 4px; margin-top: 4px; background: linear-gradient(90deg, #36d6ef 3px, #0000 3px), repeating-linear-gradient(90deg, #5d7a92 0 3px, #0000 3px 5px); }
.ms-b .m1 { height: 24px; margin-top: 5px; }
.ms-b .m2 { height: 23px; margin-top: 6px; }
.ms-b .m3 { height: 24px; margin-top: 5px; }
.ms-low { display: flex; height: 172px; margin-left: 2px; }
.ms-vu { width: 17px; flex: none; display: flex; flex-direction: column; align-items: flex-start; height: 172px; font: 400 11px/12px "Liberation Sans", sans-serif; color: #7990a5; }
.ms-vu em { font-style: normal; color: #5f89ad; height: 12px; margin-top: 3px; white-space: nowrap; }
.ms-vu span { height: 12px; margin-bottom: 3px; }
.fader.mf { width: 17px; height: 165px; margin: 7px 0 0 12px; border-radius: 9px; }
.mf .fill { border-radius: 0 0 9px 9px; }
.mf .fl { bottom: 9px; font-size: 14px; letter-spacing: .6px; line-height: 20px; left: -2px; right: -2px; }
.mf .fk { width: 39px; height: 39px; margin: -20px 0 0 -19.500px; }
.ms-foot { display: flex; height: 14px; margin: 4px 0 0 7px; font: 400 9.500px/14px "Liberation Sans", sans-serif; color: #6c7f92; }
.mf-g { display: flex; align-items: center; gap: 3px; }
.mf-g i { flex: 1; height: 1px; background: #5a6d80; margin-top: 8px; }
.mf-p { width: 180px; }
.mf-v { width: 118px; margin-left: 7px; }

/* TASKBAR */
.taskbar { height: 40px; flex: none; display: flex; background: #1b1b1b; }
.tb-half { width: 1600px; flex: none; display: flex; position: relative; }
.tbi { width: 49px; height: 40px; flex: none; display: flex; align-items: center; justify-content: center; position: relative; }
.tbi.on::after { content: ""; position: absolute; left: 4px; right: 5px; bottom: 0; height: 2px; background: #76b9ed; }
.tbi.act { background: #4a4a4a; width: 48px; }
.tbi.act::after { left: 0; right: 0; }
.tb-start { width: 48px; }
.tb-edge { width: 51px; }
.vmtb { width: 24px; height: 24px; display: flex; flex-direction: column; font: 700 6.500px/11px "Liberation Sans", sans-serif; text-align: center; background: #2f3f4e; color: #c8d0d8; }
.vmtb span:first-child { background: #ff4a2c; color: #fff; height: 11px; margin-bottom: 2px; }
.tb-pen { margin-left: auto; margin-right: 9px; display: flex; align-items: center; }
.tray { margin-left: auto; height: 40px; display: flex; align-items: center; border-right: 1px solid #5b5b5b; margin-right: 4px; width: 256px; color: #eee; }
.tray svg { flex: none; margin-right: 11px; }
.tray-eng { font-size: 12px; margin: 0 14px 0 6px; }
.tray-note { width: 30px; position: relative; flex: none; }
.tray-note svg { margin: 0; }
.tray-note b { position: absolute; left: 7px; top: 5px; width: 16px; height: 16px; border-radius: 50%; border: 1px solid #777; background: #444; color: #ddd; font: 700 10px/14px "Open Sans", sans-serif; text-align: center; }
```
